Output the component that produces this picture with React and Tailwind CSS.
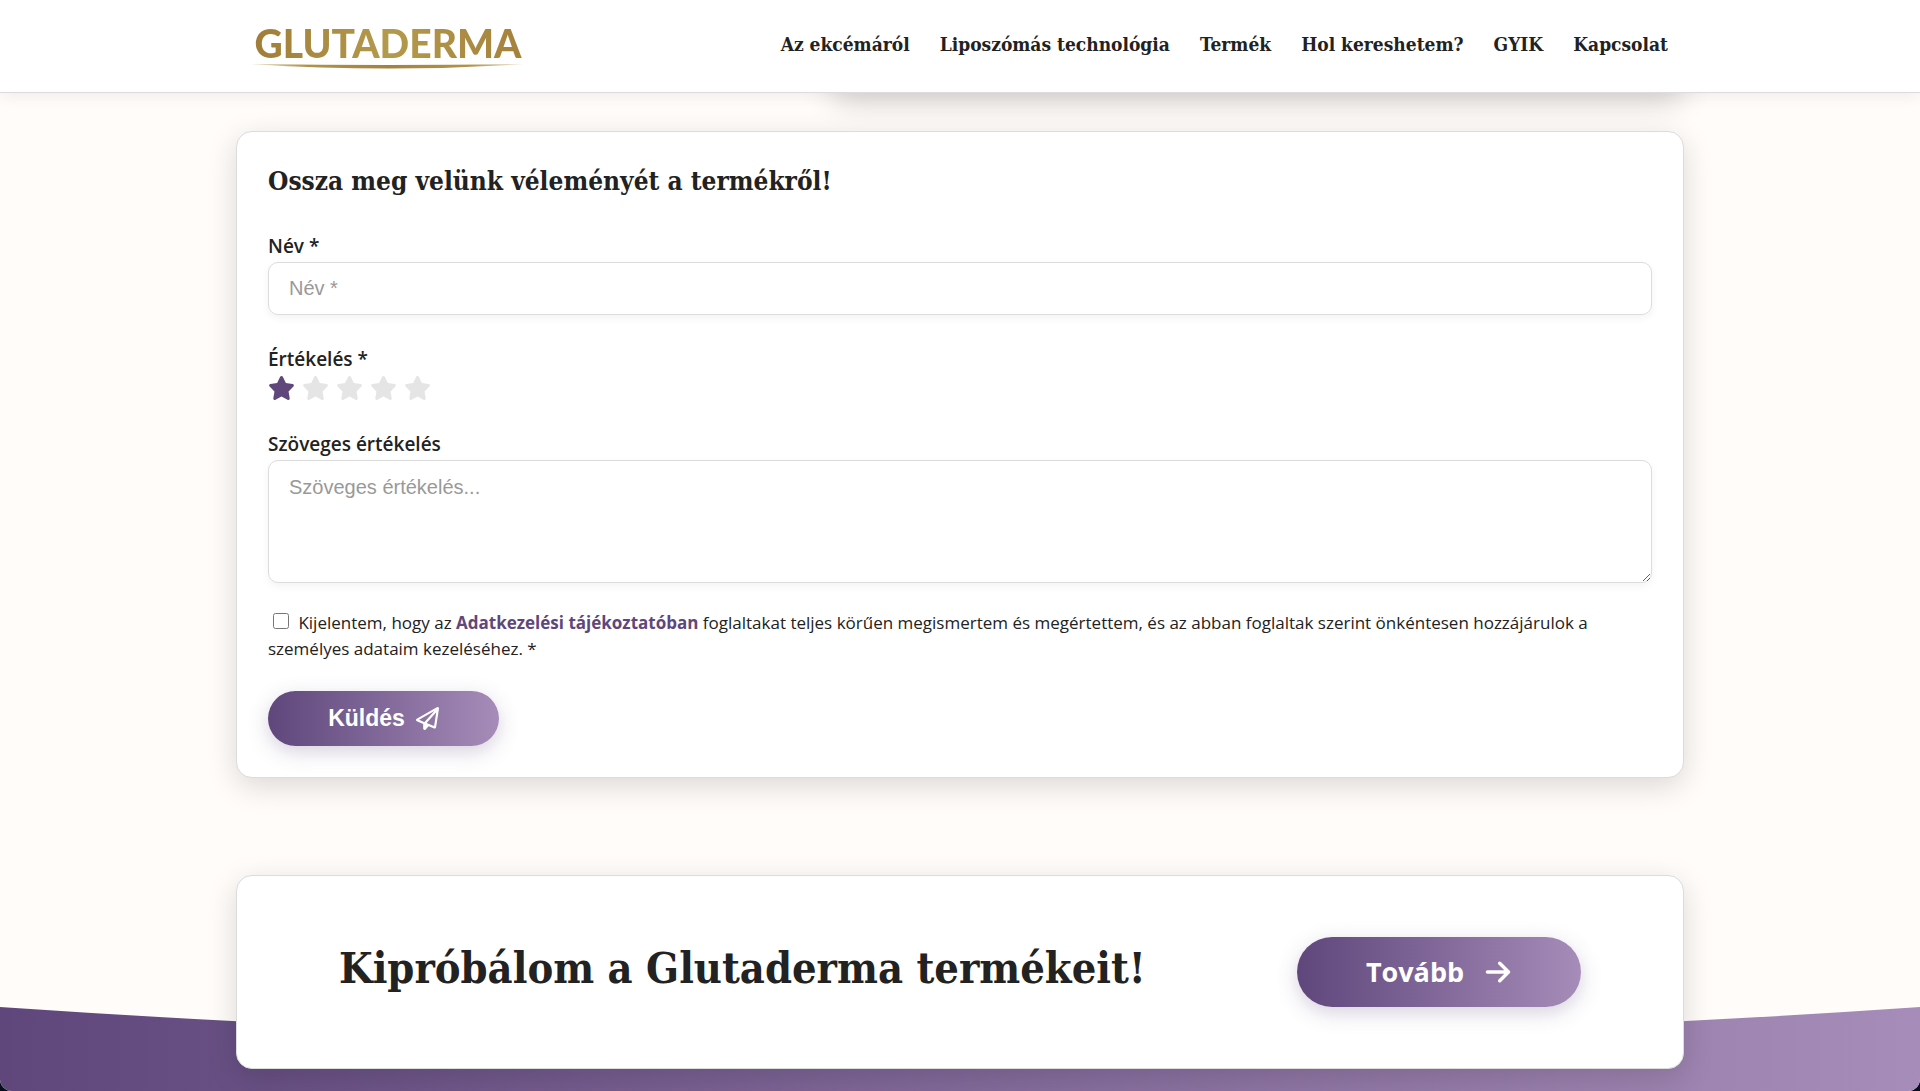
import React, { useState } from 'react';
import { FaArrowRight, FaRegPaperPlane, FaStar } from 'react-icons/fa6';

const navItems = [
  'Az ekcémáról',
  'Liposzómás technológia',
  'Termék',
  'Hol kereshetem?',
  'GYIK',
  'Kapcsolat',
];

function Logo() {
  return (
    <a href="#" className="flex flex-col items-center">
      <span className="bg-linear-to-r from-[#a07d38] via-[#b49a4c] to-[#a5823c] bg-clip-text font-['Lato',sans-serif] text-[39px] leading-10 font-black text-transparent">
        GLUTADERMA
      </span>
      <svg viewBox="0 0 272 6" className="h-[6px] w-[272px]" aria-hidden="true">
        <defs>
          <linearGradient id="swoosh">
            <stop offset="0" stopColor="#b0934a" stopOpacity="0.3" />
            <stop offset="0.2" stopColor="#b0934a" />
            <stop offset="0.5" stopColor="#a5823c" />
            <stop offset="0.8" stopColor="#b0934a" />
            <stop offset="1" stopColor="#b0934a" stopOpacity="0.3" />
          </linearGradient>
        </defs>
        <path d="M0 1 Q136 3 272 1 Q136 10 0 1Z" fill="url(#swoosh)" />
      </svg>
    </a>
  );
}

function StarRating({ value, onChange }) {
  return (
    <div className="flex gap-[7px]">
      {[1, 2, 3, 4, 5].map((n) => (
        <label key={n} className="relative cursor-pointer">
          <input
            type="radio"
            name="rating"
            value={n}
            checked={value === n}
            onChange={() => onChange(n)}
            aria-label={`${n} csillag`}
            className="sr-only"
          />
          <FaStar className={n <= value ? 'h-[26px] w-[27px] text-[#5f477c]' : 'h-[26px] w-[27px] text-[#e5e5e5]'} />
        </label>
      ))}
    </div>
  );
}

function App() {
  const [name, setName] = useState('');
  const [rating, setRating] = useState(1);
  const [review, setReview] = useState('');
  const [accepted, setAccepted] = useState(false);

  const handleSubmit = (e) => {
    e.preventDefault();
  };

  return (
    <div className="bg-[#05101c] font-['Open_Sans',sans-serif] text-[#222]">
      <div className="flex min-h-screen flex-col overflow-hidden rounded-b-xl bg-[#fffcf9]">
        {/* HEADER */}
        <header className="relative z-10 border-b border-[#dcdcde] bg-white shadow-[0_2px_16px_rgba(0,0,0,0.08)]">
          <div className="mx-auto flex h-[92px] w-full max-w-[1448px] items-center justify-between px-4">
            <Logo />
            <nav className="flex gap-[30px] pb-1 font-['DejaVu_Serif_Condensed','DejaVu_Serif',serif] text-[19px] font-bold">
              {navItems.map((item) => (
                <a key={item} href="#">{item}</a>
              ))}
            </nav>
          </div>
        </header>

        <main className="mx-auto w-full max-w-[1448px]">
          {/* Bottom edge of the product card */}
          <div className="-mt-6 ml-auto h-6 w-[59%] rounded-b-2xl bg-white shadow-[0_8px_30px_rgba(0,0,0,0.2)]" />

          {/* REVIEW FORM */}
          <section className="mt-[38px] rounded-2xl border border-[#dcdcdc] bg-white px-[31px] pt-[31px] pb-[31px] shadow-[0_8px_30px_rgba(0,0,0,0.15)]">
            <h2 className="mb-[31px] font-['DejaVu_Serif_Condensed','DejaVu_Serif',serif] text-[26px] leading-9 font-bold">
              Ossza meg velünk véleményét a termékről!
            </h2>
            <form onSubmit={handleSubmit}>
              <label htmlFor="name" className="block text-[19px] leading-8 font-semibold">Név *</label>
              <input
                id="name"
                type="text"
                placeholder="Név *"
                value={name}
                onChange={(e) => setName(e.target.value)}
                className="mb-7 block h-[53px] w-full rounded-[10px] border border-[#dcdcdc] px-5 font-['Liberation_Sans',sans-serif] text-[20px] shadow-[0_3px_8px_rgba(0,0,0,0.05)] placeholder:text-[#999]"
              />

              <div className="mb-[27px]">
                <span className="block text-[19px] leading-8 font-semibold">Értékelés *</span>
                <StarRating value={rating} onChange={setRating} />
              </div>

              <label htmlFor="review" className="block text-[19px] leading-8 font-semibold">Szöveges értékelés</label>
              <textarea
                id="review"
                placeholder="Szöveges értékelés..."
                value={review}
                onChange={(e) => setReview(e.target.value)}
                className="mb-[27px] block h-[123px] w-full resize rounded-[10px] border border-[#dcdcdc] px-5 py-3 font-['Liberation_Sans',sans-serif] text-[20px] leading-7 shadow-[0_3px_8px_rgba(0,0,0,0.05)] placeholder:text-[#999]"
              />

              <div className="mb-[29px] text-[17px] leading-[26px]">
                <input
                  id="consent"
                  type="checkbox"
                  checked={accepted}
                  onChange={(e) => setAccepted(e.target.checked)}
                  className="mx-[5px] h-4 w-4"
                />{' '}
                <label htmlFor="consent">Kijelentem, hogy az</label>{' '}
                <a href="#" className="font-bold text-[#5f477c]">Adatkezelési tájékoztatóban</a>{' '}
                <label htmlFor="consent">
                  foglaltakat teljes körűen megismertem és megértettem, és az abban foglaltak szerint önkéntesen hozzájárulok a személyes adataim kezeléséhez. *
                </label>
              </div>

              <button
                type="submit"
                className="flex h-[55px] w-[231px] items-center justify-center gap-[11px] rounded-full bg-linear-to-r from-[#5f477c] to-[#a68cb8] font-['Liberation_Sans',sans-serif] text-[23px] font-bold text-white shadow-[0_6px_20px_rgba(95,71,124,0.25)]"
              >
                Küldés
                <FaRegPaperPlane className="h-[23px] w-[23px]" />
              </button>
            </form>
          </section>
        </main>

        {/* CALL TO ACTION */}
        <div className="relative mt-[97px] grow">
          <svg
            viewBox="0 0 1920 84"
            preserveAspectRatio="none"
            className="absolute inset-x-0 bottom-0 h-[84px] w-full"
            aria-hidden="true"
          >
            <defs>
              <linearGradient id="wave">
                <stop offset="0" stopColor="#5f477c" />
                <stop offset="1" stopColor="#a68cb8" />
              </linearGradient>
            </defs>
            <path d="M0 0 Q960 66 1920 0 V84 H0Z" fill="url(#wave)" />
          </svg>
          <section className="relative mx-auto mb-[22px] flex min-h-[194px] w-full max-w-[1448px] items-center justify-between rounded-2xl border border-[#dcdcdc] bg-white px-[102px] shadow-[0_8px_30px_rgba(0,0,0,0.15)]">
            <h2 className="pb-2 font-['DejaVu_Serif_Condensed','DejaVu_Serif',serif] text-[43px] leading-[56px] font-bold">
              Kipróbálom a Glutaderma termékeit!
            </h2>
            <a
              href="#"
              className="flex h-[70px] w-[284px] items-center justify-center gap-5 rounded-full bg-linear-to-r from-[#5f477c] to-[#a68cb8] text-[27px] font-bold text-white shadow-[0_6px_20px_rgba(95,71,124,0.25)]"
            >
              Tovább
              <FaArrowRight className="h-7 w-7" />
            </a>
          </section>
        </div>
      </div>
    </div>
  );
}

export default App;
